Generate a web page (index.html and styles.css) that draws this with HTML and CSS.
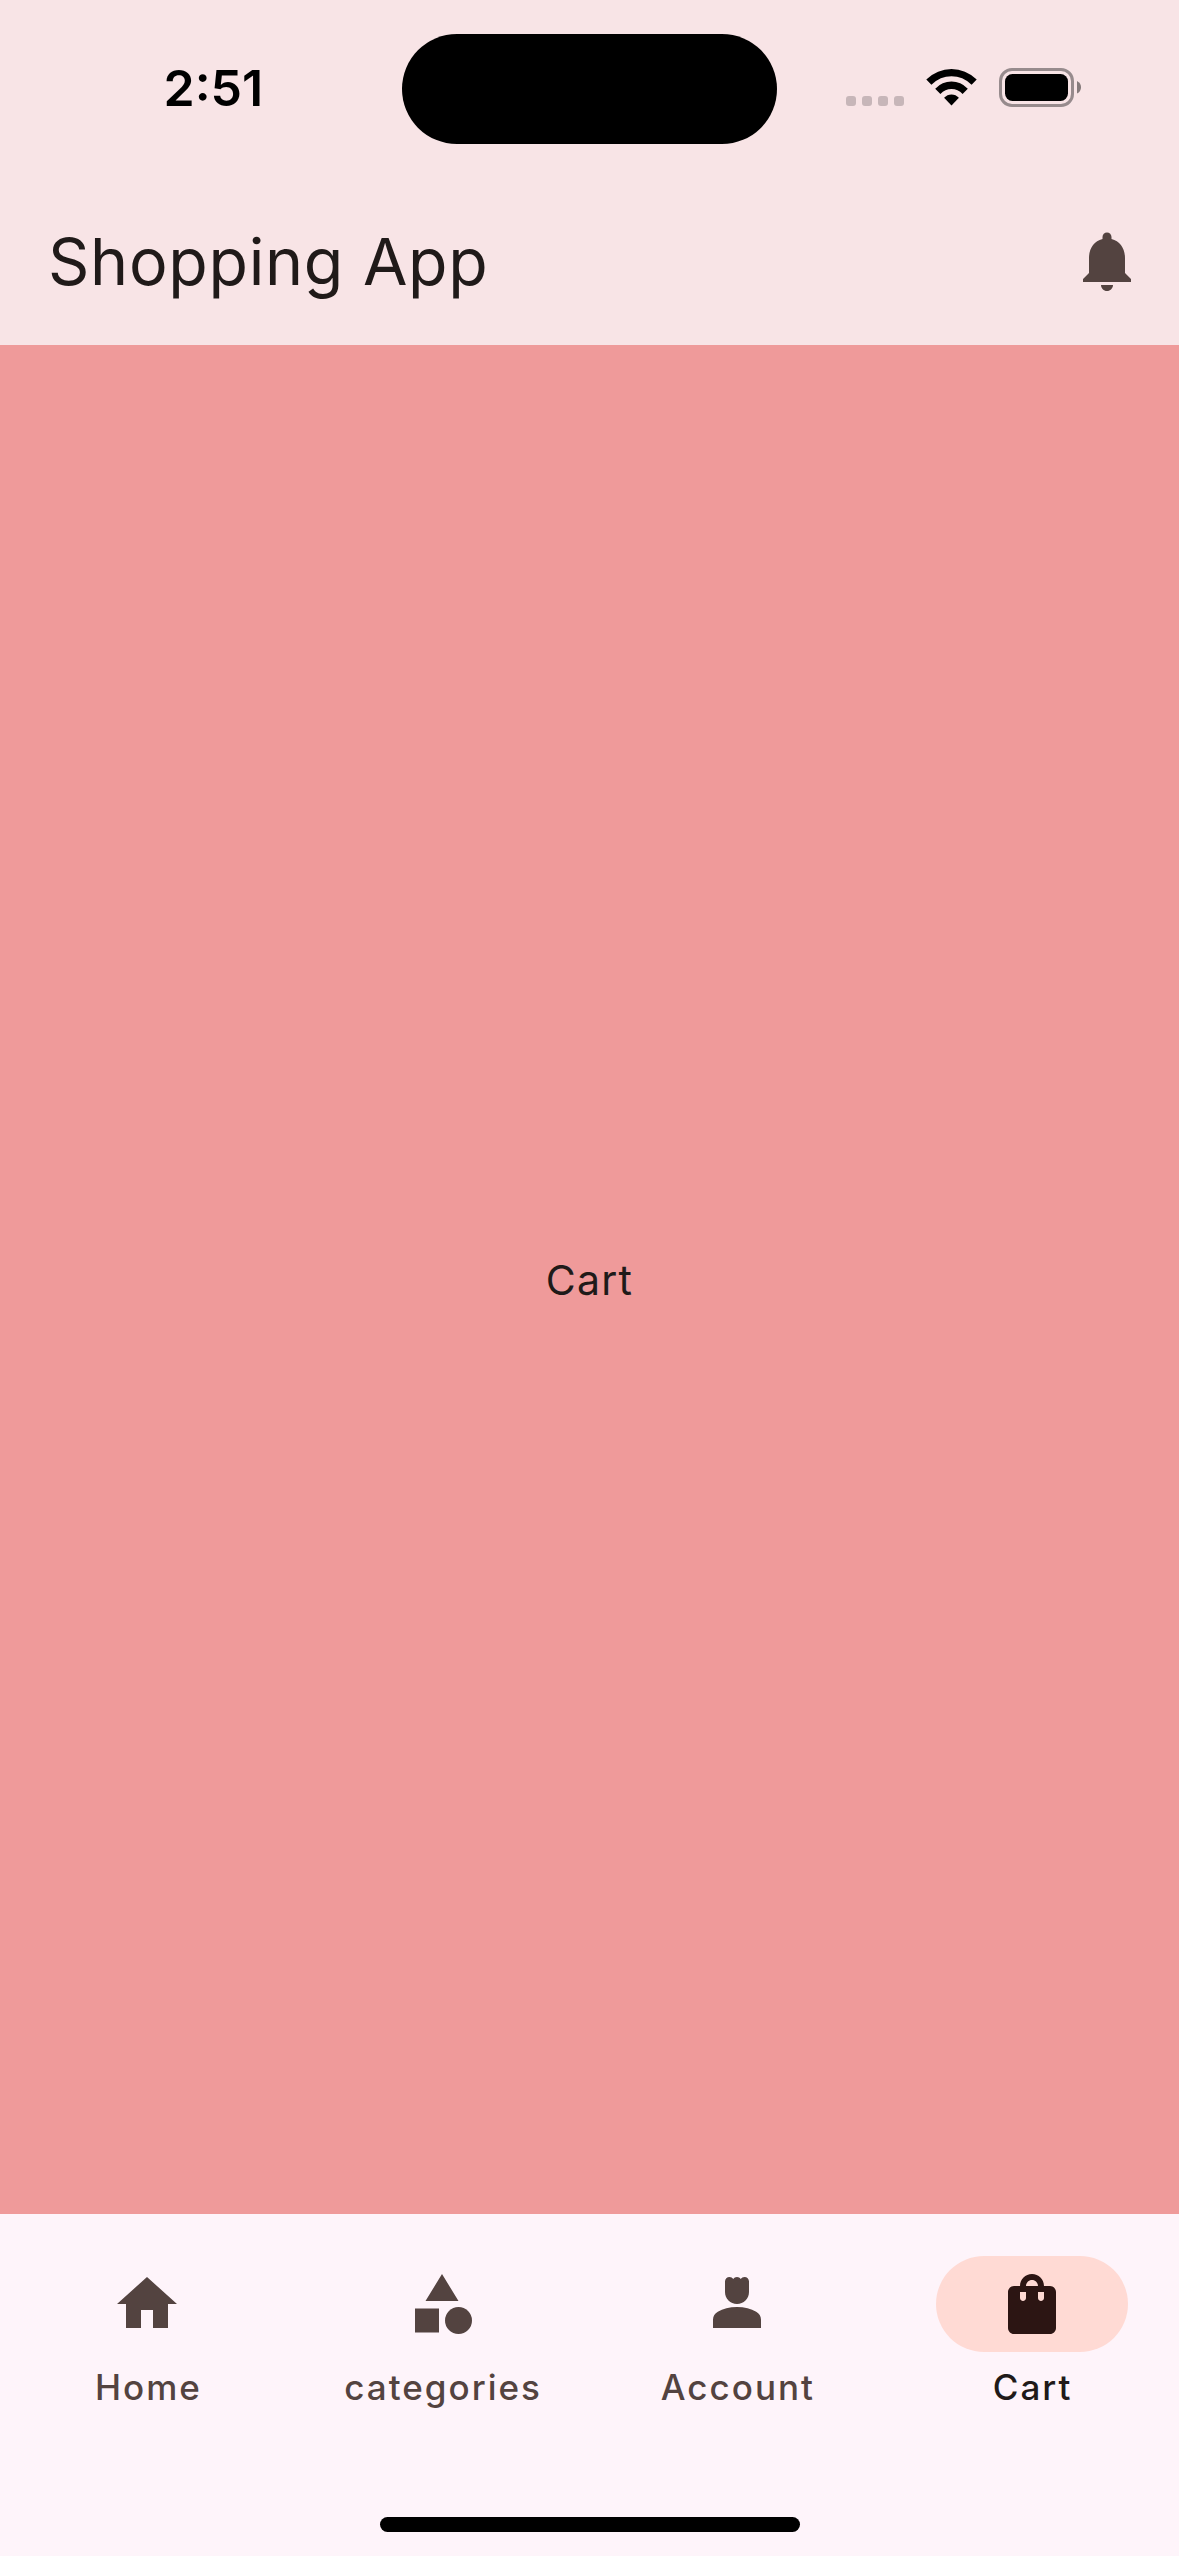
FILE: index.html
```html
<!DOCTYPE html>
<html lang="en">
<head>
<meta charset="utf-8">
<title>Shopping App</title>
<link rel="stylesheet" href="styles.css">
</head>
<body>
<div class="screen">
  <header class="top">
    <div class="status-bar">
      <div class="status-side status-left"><span class="time">2:51</span></div>
      <div class="island"></div>
      <div class="status-side status-right">
        <div class="signal"><i></i><i></i><i></i><i></i></div>
        <svg class="wifi" viewBox="0 0 51 37">
          <path d="M0.3 10.6Q11.3 0 25.5 0T50.7 10.6L45.6 15.7Q36.8 7.3 25.5 7.3T5.4 15.7Z"/>
          <path d="M9.2 19.7Q16.2 12.6 25.5 12.6T41.8 19.7L36.6 24.9Q31.9 20 25.5 20T14.4 24.9Z"/>
          <path d="M18.1 28.8Q21.2 25.4 25.5 25.4T32.9 28.8L25.5 36.6Z"/>
        </svg>
        <svg class="battery" viewBox="0 0 82 39">
          <rect class="battery-shell" x="1.5" y="1.5" width="72" height="36" rx="11.5"/>
          <rect x="6" y="6" width="63" height="27" rx="7.5"/>
          <path class="battery-tip" d="M78 13q4 2 4 6.300t-4 6.300z"/>
        </svg>
      </div>
    </div>
    <div class="app-bar">
      <h1 class="title">Shopping App</h1>
      <svg class="icon" viewBox="0 0 24 24"><path d="M12 22c1.100 0 2-.9 2-2h-4c0 1.100.89 2 2 2zm6-6v-5c0-3.070-1.640-5.640-4.500-6.320V4c0-.83-.67-1.500-1.500-1.500s-1.500.67-1.500 1.500v.68C7.630 5.360 6 7.920 6 11v5l-2 2v1h16v-1l-2-2z"/></svg>
    </div>
  </header>
  <main class="content"><p class="page-name">Cart</p></main>
  <footer class="bottom">
    <nav class="nav">
      <a class="nav-item">
        <span class="indicator"><svg class="icon" viewBox="0 0 24 24"><path d="M10 20v-6h4v6h5v-8h3L12 3 2 12h3v8z"/></svg></span>
        <span class="label">Home</span>
      </a>
      <a class="nav-item">
        <span class="indicator"><svg class="icon" viewBox="0 0 24 24"><path d="M12 2l-5.500 9h11zM3 13.500h8v8H3z"/><circle cx="17.500" cy="17.500" r="4.500"/></svg></span>
        <span class="label">categories</span>
      </a>
      <a class="nav-item">
        <span class="indicator"><svg class="icon" viewBox="0 0 24 24"><path d="M18.390 14.560C16.710 13.700 14.530 13 12 13s-4.710.7-6.390 1.560C4.610 15.070 4 16.100 4 17.220V20h16v-2.780c0-1.120-.61-2.150-1.610-2.660zM12 12c2.210 0 4-1.790 4-4V4.500c0-.83-.67-1.500-1.500-1.500-.52 0-.98.27-1.250.67-.27-.4-.73-.67-1.250-.67s-.98.27-1.250.67C10.480 3.270 10.020 3 9.500 3 8.670 3 8 3.670 8 4.500V8c0 2.210 1.790 4 4 4z"/></svg></span>
        <span class="label">Account</span>
      </a>
      <a class="nav-item selected">
        <span class="indicator"><svg class="icon" viewBox="0 0 24 24"><path d="M18 6h-2c0-2.210-1.790-4-4-4S8 3.790 8 6H6c-1.100 0-2 .9-2 2v12c0 1.100.9 2 2 2h12c1.100 0 2-.9 2-2V8c0-1.100-.9-2-2-2zm-8 4c0 .55-.45 1-1 1s-1-.45-1-1V8h2v2zm2-6c1.100 0 2 .9 2 2h-4c0-1.100.9-2 2-2zm4 6c0 .55-.45 1-1 1s-1-.45-1-1V8h2v2z"/></svg></span>
        <span class="label">Cart</span>
      </a>
    </nav>
    <div class="home-bar"></div>
  </footer>
</div>
</body>
</html>
```

FILE: styles.css
```css
* { box-sizing: border-box; }

body {
  margin: 0;
  font-family: Inter, "Liberation Sans", sans-serif;
  color: #201a19;
}

.screen {
  width: 1179px;
  height: 2556px;
  display: flex;
  flex-direction: column;
  overflow: hidden;
}

.top {
  height: 345px;
  background: #f8e4e6;
}

.status-bar {
  height: 177px;
  padding-top: 33.5px;
  display: grid;
  grid-template-columns: 401.5px 375.5px 1fr;
  align-items: start;
}

.island {
  height: 110.5px;
  border-radius: 56px;
  background: #000;
}

.status-side {
  display: flex;
}

.status-left {
  padding: 24.5px 0 0 163.5px;
}

.time {
  font-size: 50px;
  line-height: 60px;
  font-weight: 600;
  color: #000;
}

.status-right {
  padding: 34.5px 0 0 69px;
}

.signal {
  display: flex;
  gap: 6px;
  padding-top: 28px;
}

.signal i {
  width: 10px;
  height: 10px;
  border-radius: 3px;
  background: #c7b6b9;
}

.wifi {
  width: 51px;
  height: 37px;
  margin: 1px 0 0 22px;
}

.battery {
  width: 82px;
  height: 39px;
  margin-left: 22px;
}

.battery-shell {
  fill: none;
  stroke: #978b8d;
  stroke-width: 3;
}

.battery-tip { fill: #867b7c; }

.app-bar {
  height: 168px;
  padding: 0 36px 0 48px;
  display: flex;
  align-items: center;
  justify-content: space-between;
}

.title {
  margin: 0;
  padding-top: 2px;
  font-size: 64.500px;
  line-height: 84px;
  font-weight: 400;
  letter-spacing: 0.7px;
}

.icon {
  display: block;
  width: 72px;
  height: 72px;
  fill: #534340;
}

.content {
  flex: 1;
  display: flex;
  align-items: center;
  justify-content: center;
  background: #ef9a9a;
}

.page-name {
  margin: 0;
  font-size: 41px;
  line-height: 60px;
  letter-spacing: 1.200px;
}

.bottom {
  height: 342px;
  background: #fef4fa;
}

.nav {
  height: 303px;
  padding-top: 42px;
  display: grid;
  grid-template-columns: repeat(4, 1fr);
}

.nav-item {
  display: flex;
  flex-direction: column;
  align-items: center;
  gap: 11px;
}

.indicator {
  width: 192px;
  height: 96px;
  border-radius: 48px;
  display: flex;
  align-items: center;
  justify-content: center;
}

.label {
  padding-left: 2px;
  font-size: 35px;
  line-height: 48px;
  font-weight: 500;
  letter-spacing: 2px;
  color: #534340;
}

.selected .indicator { background: #ffdad4; }
.selected .icon { fill: #2c1513; }
.selected .label { color: #201a19; }

.home-bar {
  width: 420px;
  height: 15px;
  margin-left: 380px;
  border-radius: 8px;
  background: #000;
}
```
